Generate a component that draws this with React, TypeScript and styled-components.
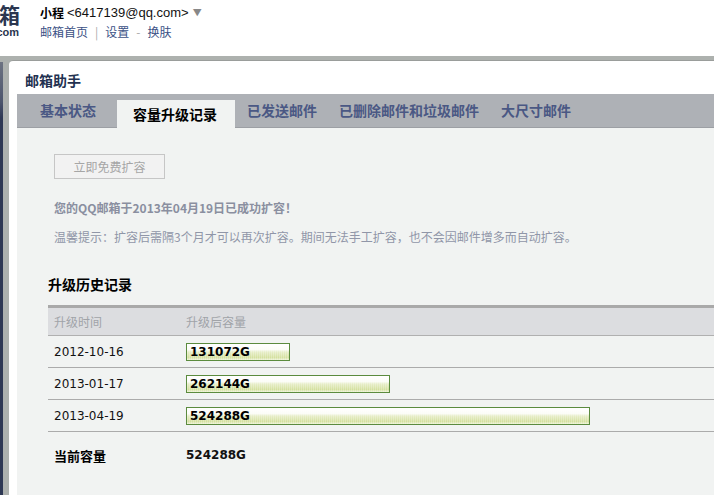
import React from "react";
import styled, { createGlobalStyle } from "styled-components";

const records = [
  { date: "2012-10-16", size: 131072 },
  { date: "2013-01-17", size: 262144 },
  { date: "2013-04-19", size: 524288 },
];
const maxSize = 524288;

const tabs = ["基本状态", "容量升级记录", "已发送邮件", "已删除邮件和垃圾邮件", "大尺寸邮件"];
const activeTab = 1;

function App() {
  return (
    <Page>
      <GlobalStyle />
      <Header>
        <Logo>
          <LogoBig>箱</LogoBig>
          <LogoSmall>com</LogoSmall>
        </Logo>
        <UserBox>
          <UserLine>
            <UserName>小程</UserName>
            <UserMail>&lt;6417139@qq.com&gt;</UserMail>
            <Caret>▼</Caret>
          </UserLine>
          <LinkLine>
            <HeadLink>邮箱首页</HeadLink>
            <Sep>|</Sep>
            <HeadLink>设置</HeadLink>
            <Sep>-</Sep>
            <HeadLink>换肤</HeadLink>
          </LinkLine>
        </UserBox>
      </Header>
      <Main>
        <Side>
          <SideStrip />
        </Side>
        <Panel>
          <PanelTitle>邮箱助手</PanelTitle>
          <TabBar>
            {tabs.map((t, i) => (
              <Tab key={t} $active={i === activeTab}>
                {t}
              </Tab>
            ))}
          </TabBar>
          <Content>
            <Intro>
              <FreeButton disabled>立即免费扩容</FreeButton>
              <Notice>您的QQ邮箱于2013年04月19日已成功扩容！</Notice>
              <Tip>
                温馨提示：扩容后需隔3个月才可以再次扩容。期间无法手工扩容，也不会因邮件增多而自动扩容。
              </Tip>
            </Intro>
            <SectionTitle>升级历史记录</SectionTitle>
            <HistoryTable>
              <thead>
                <tr>
                  <Th>升级时间</Th>
                  <Th>升级后容量</Th>
                </tr>
              </thead>
              <tbody>
                {records.map((r) => (
                  <Row key={r.date}>
                    <DateCell>{r.date}</DateCell>
                    <Td>
                      <Bar style={{ width: Math.round((400 * r.size) / maxSize) + 4 }}>
                        {r.size}G
                      </Bar>
                    </Td>
                  </Row>
                ))}
                <TotalRow>
                  <TotalLabel>当前容量</TotalLabel>
                  <TotalValue>524288G</TotalValue>
                </TotalRow>
              </tbody>
            </HistoryTable>
          </Content>
        </Panel>
      </Main>
    </Page>
  );
}

const GlobalStyle = createGlobalStyle`
  html, body {
    margin: 0;
    padding: 0;
    background: #fff;
    overflow: hidden;
  }
  body {
    font-family: "Noto Sans CJK SC", "DejaVu Sans", sans-serif;
    font-size: 12px;
  }
`;

const Page = styled.div`
  width: 714px;
  height: 495px;
  display: flex;
  flex-direction: column;
  overflow: hidden;
`;

const Header = styled.div`
  height: 56px;
  flex: none;
  display: flex;
  background: #fff;
`;

const Logo = styled.div`
  width: 20px;
  overflow: hidden;
  display: flex;
  flex-direction: column;
  align-items: flex-end;
  padding-top: 4px;
  color: #2b3650;
`;

const LogoBig = styled.div`
  font: bold 21px/21px "Noto Sans CJK SC", sans-serif;
`;

const LogoSmall = styled.div`
  font: bold 11px/12px "Liberation Sans", Arial, sans-serif;
  margin-top: 1px;
  margin-right: 1px;
`;

const UserBox = styled.div`
  margin-left: 20px;
  padding-top: 3px;
`;

const UserLine = styled.div`
  display: flex;
  align-items: center;
  height: 18px;
`;

const UserName = styled.span`
  font: bold 12px "Noto Sans CJK SC", sans-serif;
  color: #000;
`;

const UserMail = styled.span`
  font: 13px "Liberation Sans", Arial, sans-serif;
  color: #111;
  margin-left: 3px;
`;

const Caret = styled.span`
  font-size: 9px;
  color: #888;
  margin-left: 4px;
`;

const LinkLine = styled.div`
  display: flex;
  align-items: center;
  height: 19px;
  margin-top: 1px;
`;

const HeadLink = styled.span`
  color: #3b5185;
  font-size: 12px;
`;

const Sep = styled.span`
  color: #aaa;
  margin: 0 7px;
`;

const Main = styled.div`
  flex: 1;
  display: flex;
  background: #adb1ae;
  padding-top: 4px;
`;

const Side = styled.div`
  width: 9px;
  flex: none;
  display: flex;
`;

const SideStrip = styled.div`
  width: 3px;
  margin-top: 2px;
  background: linear-gradient(#6d7382 0, #4c556c 40px, #2e3854 56px, #2e3854 100%);
`;

const Panel = styled.div`
  flex: 1;
  display: flex;
  flex-direction: column;
  background: #fff;
  border-top: 1px solid #9a9d9b;
  border-top-left-radius: 4px;
  padding-left: 8px;
`;

const PanelTitle = styled.div`
  height: 33px;
  box-sizing: border-box;
  padding: 9px 0 0 8px;
  font: bold 14px/20px "Noto Sans CJK SC", sans-serif;
  color: #223150;
`;

const TabBar = styled.div`
  height: 34px;
  box-sizing: border-box;
  display: flex;
  align-items: flex-end;
  gap: 2px;
  padding-left: 13px;
  background: #aeb1b6;
  border-bottom: 1px solid #9c9fa4;
`;

const Tab = styled.div<{ $active?: boolean }>`
  height: ${(p) => (p.$active ? "28px" : "33px")};
  margin-bottom: ${(p) => (p.$active ? "-1px" : "0")};
  margin-left: ${(p) => (p.$active ? "9px" : "0")};
  padding: ${(p) => (p.$active ? "0 18px 0 16px" : "0 10px 2px")};
  display: flex;
  align-items: center;
  box-sizing: border-box;
  background: ${(p) => (p.$active ? "#f1f3f2" : "transparent")};
  color: ${(p) => (p.$active ? "#000" : "#4a5884")};
  font: bold 14px/20px "Noto Sans CJK SC", sans-serif;
  white-space: nowrap;
`;

const Content = styled.div`
  flex: 1;
  background: #f1f3f2;
  padding: 26px 0 0 31px;
`;

const Intro = styled.div`
  padding-left: 6px;
`;

const FreeButton = styled.button`
  width: 111px;
  height: 25px;
  padding: 0;
  border: 1px solid #c6c6c6;
  background: #f2f2f2;
  color: #a6a6a6;
  font: 12px "Noto Sans CJK SC", sans-serif;
`;

const Notice = styled.div`
  margin-top: 20px;
  font: bold 12px/18px "Noto Sans CJK SC", sans-serif;
  color: #8a8fa0;
`;

const Tip = styled.div`
  margin-top: 11px;
  font: 12px/18px "Noto Sans CJK SC", sans-serif;
  color: #9096a8;
`;

const SectionTitle = styled.div`
  margin-top: 28px;
  font: bold 14px/20px "Noto Sans CJK SC", sans-serif;
  color: #000;
`;

const HistoryTable = styled.table`
  margin-top: 11px;
  width: 100%;
  border-collapse: collapse;
  border-top: 3px solid #a9a9a9;
`;

const Th = styled.th`
  height: 27px;
  padding: 0;
  text-align: left;
  font: 12px "Noto Sans CJK SC", sans-serif;
  color: #a0a3a8;
  background: #dcdde0;
  border-bottom: 1px solid #b0b0b0;
  &:first-child {
    width: 132px;
    padding-left: 6px;
  }
`;

const Row = styled.tr`
  height: 32px;
  border-bottom: 1px solid #ababab;
`;

const Td = styled.td`
  padding: 0;
  vertical-align: middle;
`;

const DateCell = styled(Td)`
  padding-left: 6px;
  font: 12px "DejaVu Sans", Verdana, sans-serif;
  color: #111;
`;

const Bar = styled.div`
  box-sizing: border-box;
  height: 18px;
  border: 1px solid #5b8b3e;
  padding-left: 3px;
  font: bold 12px/17px "DejaVu Sans", Verdana, sans-serif;
  color: #000;
  background:
    repeating-linear-gradient(90deg, rgba(255, 255, 255, 0.25) 0 1px, transparent 1px 2px),
    linear-gradient(#ffffff 0%, #fbfcf6 35%, #e6edc6 50%, #d4e09e 85%, #eef3d8 100%);
`;

const TotalRow = styled.tr`
  height: 47px;
`;

const TotalLabel = styled.td`
  padding-left: 6px;
  font: bold 13px "Noto Sans CJK SC", sans-serif;
  color: #000;
`;

const TotalValue = styled.td`
  padding: 0;
  font: bold 12px "DejaVu Sans", Verdana, sans-serif;
  color: #111;
`;

export default App;
